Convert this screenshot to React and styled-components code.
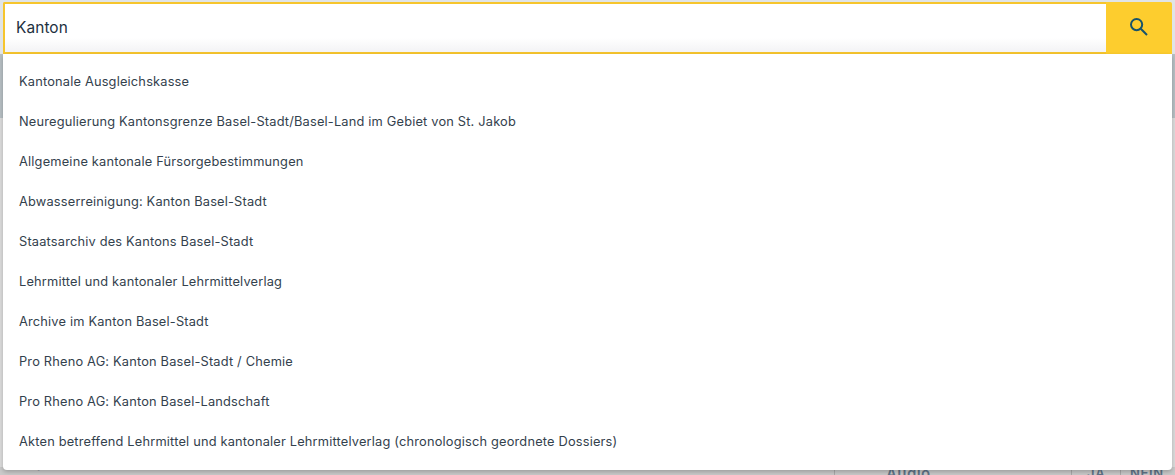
import React from "react";
import styled, { createGlobalStyle } from "styled-components";

const Global = createGlobalStyle`
  html, body { margin: 0; padding: 0; background: #dcdcdc; }
  body { font-family: "Inter", "Liberation Sans", sans-serif; }
`;

const Page = styled.div`
  position: relative;
  width: 1175px;
  height: 475px;
  overflow: hidden;
  background: #dcdcdc;
  display: flex;
  flex-direction: column;
`;

const Header = styled.div`
  flex: none;
  padding: 2px 3px 0;
  background: #e0e4e6;
`;

const SearchBar = styled.form`
  display: flex;
  height: 52px;
  margin: 0;
  border-radius: 2px 2px 0 0;
  overflow: hidden;
`;

const SearchInput = styled.div`
  flex: 1;
  box-sizing: border-box;
  border: 2px solid #f6c52d;
  border-right: 0;
  background: linear-gradient(#fff 70%, #f3f3f5 100%);
  padding: 0 11px 2px;
  display: flex;
  align-items: center;
  font-size: 15.4px;
  color: #1d3040;
  letter-spacing: 0.1px;
`;

const SearchButton = styled.div`
  width: 66px;
  padding-bottom: 3px;
  box-sizing: border-box;
  background: #fdcd2e;
  display: flex;
  align-items: center;
  justify-content: center;
`;

const Band = styled.div`
  flex: none;
  height: 64px;
  background: #b6bfc3;
`;

const Backdrop = styled.div`
  margin-top: auto;
  height: 8px;
  display: grid;
  grid-template-columns: 834px 237px 49px 55px;
  background: #c9c9c9;
  color: #5f7488;
`;

const Cell = styled.div`
  border-left: ${(p) => (p.$line ? "1px solid #a9a9a9" : "none")};
  padding-left: ${(p) => p.$inset}px;
  line-height: 13px;
  font-size: ${(p) => p.$size}px;
  font-weight: 600;
  letter-spacing: ${(p) => p.$track}px;
  box-sizing: border-box;
  white-space: nowrap;
`;

const Descender = styled.div`
  margin-top: -11px;
  font-size: 12px;
  color: #2b4a5e;
  line-height: 16px;
`;

const Dropdown = styled.ul`
  position: absolute;
  left: 3px;
  top: 54px;
  width: 1169px;
  height: 416px;
  box-sizing: border-box;
  margin: 0;
  padding: 7px 0 0;
  list-style: none;
  background: #fff;
  border-radius: 0 0 4px 4px;
  box-shadow: 0 2px 4px rgba(0, 0, 0, 0.22);
`;

const Item = styled.li`
  height: 40px;
  display: flex;
  align-items: center;
  padding: 0 16px;
  font-size: 12.8px;
  letter-spacing: 0.19px;
  color: #33414d;
  white-space: nowrap;
`;

const items = [
  "Kantonale Ausgleichskasse",
  "Neuregulierung Kantonsgrenze Basel-Stadt/Basel-Land im Gebiet von St. Jakob",
  "Allgemeine kantonale Fürsorgebestimmungen",
  "Abwasserreinigung: Kanton Basel-Stadt",
  "Staatsarchiv des Kantons Basel-Stadt",
  "Lehrmittel und kantonaler Lehrmittelverlag",
  "Archive im Kanton Basel-Stadt",
  "Pro Rheno AG: Kanton Basel-Stadt / Chemie",
  "Pro Rheno AG: Kanton Basel-Landschaft",
  "Akten betreffend Lehrmittel und kantonaler Lehrmittelverlag (chronologisch geordnete Dossiers)",
];

export default function App() {
  return (
    <Page>
      <Global />
      <Header>
        <SearchBar>
          <SearchInput>Kanton</SearchInput>
          <SearchButton>
            <svg width="20" height="20" viewBox="0 0 20 20" fill="none" stroke="#17536b" strokeWidth="2">
              <circle cx="7.6" cy="7.6" r="5.6" />
              <path d="M11.8 11.8 L18 18" />
            </svg>
          </SearchButton>
        </SearchBar>
      </Header>
      <Band />
      <Backdrop>
        <Cell $inset={37} $size={12} $track={0}>
          <Descender>p</Descender>
        </Cell>
        <Cell $line $inset={51} $size={15} $track={0.4}>Audio</Cell>
        <Cell $line $inset={15} $size={13} $track={1}>JA</Cell>
        <Cell $line $inset={9} $size={13} $track={0.6}>NEIN</Cell>
      </Backdrop>
      <Dropdown>
        {items.map((t) => (
          <Item key={t}>{t}</Item>
        ))}
      </Dropdown>
    </Page>
  );
}
